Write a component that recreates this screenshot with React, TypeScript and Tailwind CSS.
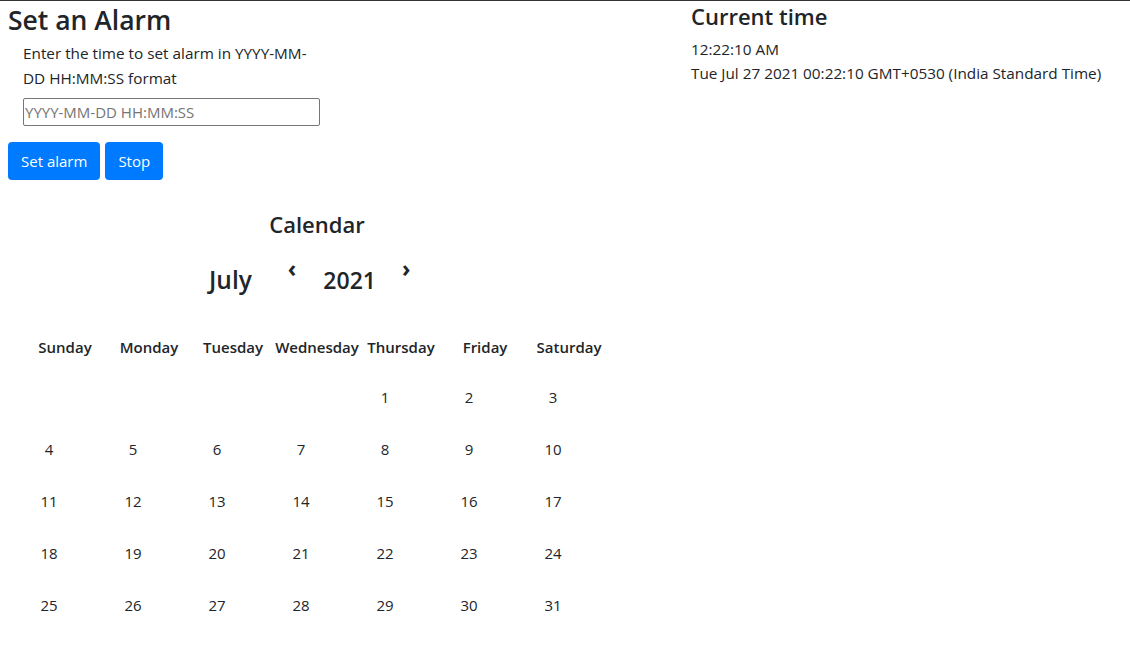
const days = ["Sunday", "Monday", "Tuesday", "Wednesday", "Thursday", "Friday", "Saturday"];

// July 2021 starts on a Thursday
const weeks: (number | null)[][] = [
  [null, null, null, null, 1, 2, 3],
  [4, 5, 6, 7, 8, 9, 10],
  [11, 12, 13, 14, 15, 16, 17],
  [18, 19, 20, 21, 22, 23, 24],
  [25, 26, 27, 28, 29, 30, 31],
];

export default function App() {
  return (
    <main
      className="min-h-screen bg-white text-[#212529] border-t border-[#333]"
      style={{ fontFamily: '"Open Sans", "Noto Sans", sans-serif' }}
    >
      <div className="flex">
        {/* Alarm + calendar */}
        <section className="w-[691px] px-2">
          <h2 className="text-[26.5px] leading-[34px] font-semibold mt-[2px]">Set an Alarm</h2>

          <div className="ml-[15px] w-[297px] mt-[4px]">
            <p className="text-[15.3px] leading-[25px]">
              Enter the time to set alarm in YYYY-MM-DD HH:MM:SS format
            </p>
            <input
              type="text"
              placeholder="YYYY-MM-DD HH:MM:SS"
              className="mt-[7px] w-full h-[28px] border border-[#767676] rounded-[2px] px-[1px] text-[15px] placeholder:text-[#757575] outline-none"
            />
          </div>

          <div className="flex gap-[5px] mt-[16px]">
            <button className="h-[38px] px-[13px] rounded bg-[#007bff] text-white text-[15px]">
              Set alarm
            </button>
            <button className="h-[38px] px-[13px] rounded bg-[#007bff] text-white text-[15px]">
              Stop
            </button>
          </div>

          {/* Calendar */}
          <div className="ml-[15px] w-[588px] mt-[29px]">
            <h4 className="text-center text-[22px] leading-[30px] font-semibold">Calendar</h4>
            <div className="flex items-start mt-[26px] ml-[186px]">
              <span className="text-[24.5px] leading-[30px] font-semibold">July</span>
              <span className="ml-[36px] -mt-[12px] text-[23px] font-bold leading-[30px]">‹</span>
              <span className="ml-[27px] text-[23px] leading-[30px] font-semibold">2021</span>
              <span className="ml-[26px] -mt-[12px] text-[23px] font-bold leading-[30px]">›</span>
            </div>

            <table className="mt-[37px] w-[588px] table-fixed text-[15px]">
              <thead>
                <tr className="h-[30px]">
                  {days.map((d) => (
                    <th key={d} className="w-[84px] text-center font-semibold p-0">
                      {d}
                    </th>
                  ))}
                </tr>
              </thead>
              <tbody>
                {weeks.map((w, i) => (
                  <tr key={i} className={i === 0 ? "h-[51px] align-bottom" : "h-[52px] align-bottom"}>
                    {w.map((n, j) => (
                      <td key={j} className="p-0 pb-[5px]">
                        <div className="w-[52px] text-center">{n ?? ""}</div>
                      </td>
                    ))}
                  </tr>
                ))}
              </tbody>
            </table>
          </div>
        </section>

        {/* Current time */}
        <section className="flex-1">
          <h4 className="text-[22px] leading-[30px] font-semibold">Current time</h4>
          <p className="text-[15.3px] leading-[24px] mt-[6px]">12:22:10 AM</p>
          <p className="text-[15.3px] leading-[24px]">Tue Jul 27 2021 00:22:10 GMT+0530 (India Standard Time)</p>
        </section>
      </div>
    </main>
  );
}
